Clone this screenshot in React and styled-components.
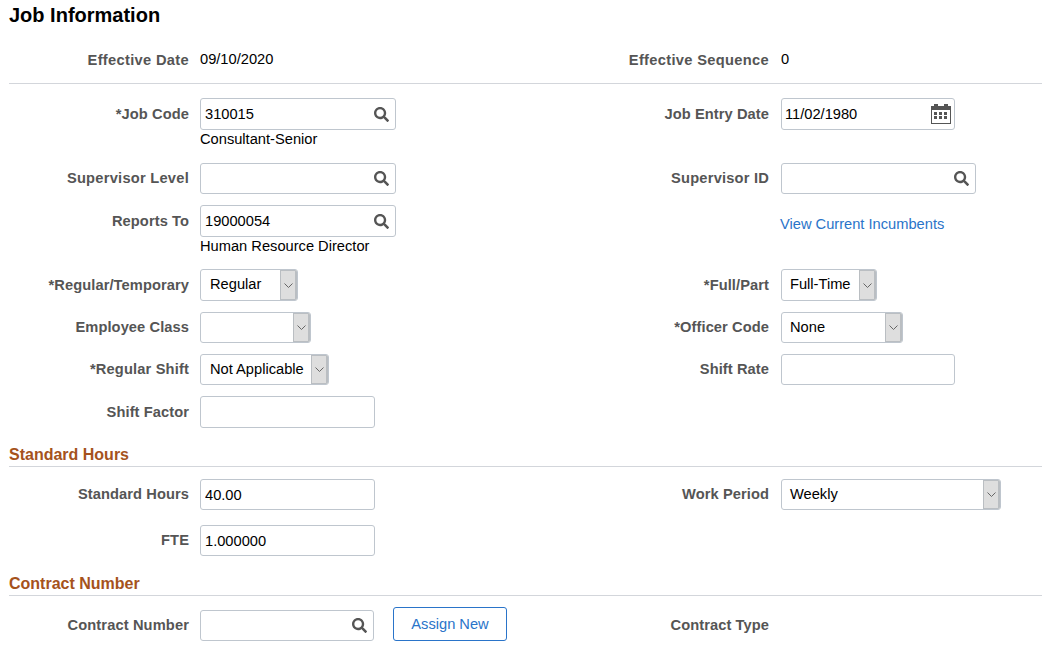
import React from 'react';
import styled, { createGlobalStyle } from 'styled-components';
import { FaSearch } from 'react-icons/fa';

const GlobalStyle = createGlobalStyle`
  html, body {
    margin: 0;
    background: #fff;
  }
  body {
    font-family: "Liberation Sans", Arial, sans-serif;
    font-size: 14.67px;
    color: #000;
  }
`;

const Page = styled.div`
  width: 1042px;
  height: 648px;
  padding-left: 9px;
  box-sizing: border-box;
  overflow: hidden;
`;

const Title = styled.h1`
  margin: 0;
  padding-top: 4px;
  font-size: 20px;
  line-height: 22px;
  font-weight: bold;
`;

const Row = styled.div`
  display: grid;
  grid-template-columns: 180px 391px 189px 1fr;
  margin-top: ${(p) => p.$top || 0}px;
`;

const Label = styled.label`
  text-align: right;
  font-weight: bold;
  letter-spacing: ${(p) => p.$track || 0.08}px;
  color: #555;
  line-height: ${(p) => (p.$compact ? 30 : 32)}px;
  height: 31px;
  white-space: nowrap;
`;

const TextInput = styled.input`
  flex: 1;
  min-width: 0;
  height: 100%;
  border: 0;
  outline: 0;
  padding: 0 0 0 4px;
  background: transparent;
  font: inherit;
  color: #000;
`;

const SelectValue = styled.span`
  flex: 1;
  padding-left: 9px;
  line-height: 29px;
  white-space: nowrap;
`;

const Field = styled.div`
  padding-left: ${(p) => (p.$right ? 12 : 11)}px;
  display: flex;
  flex-direction: ${(p) => (p.$inline ? 'row' : 'column')};
  align-items: flex-start;
  gap: ${(p) => (p.$inline ? 19 : 0)}px;

  ${TextInput} {
    padding-left: ${(p) => (p.$right ? 3 : 4)}px;
  }
  ${SelectValue} {
    padding-left: ${(p) => (p.$right ? 8 : 9)}px;
  }
`;

const Static = styled.span`
  line-height: 30px;
`;

const SubText = styled.div`
  line-height: 16px;
  margin-top: 1px;
`;

const InputBox = styled.div`
  display: flex;
  align-items: center;
  box-sizing: border-box;
  width: ${(p) => p.$width}px;
  height: ${(p) => p.$height || 31}px;
  border: 1px solid #bfc6ce;
  border-radius: 3px;
  background: #fff;
`;

const IconSlot = styled.span`
  display: flex;
  align-items: center;
  justify-content: center;
  margin-right: ${(p) => p.$gap}px;
  color: #555;
`;

const SelectBox = styled.div`
  display: flex;
  box-sizing: border-box;
  width: ${(p) => p.$width}px;
  height: ${(p) => p.$height || 31}px;
  border: 1px solid #bfc6ce;
  border-radius: 3px;
  background: #fff;
  overflow: hidden;
`;

const SelectArrow = styled.span`
  display: flex;
  align-items: center;
  justify-content: center;
  flex: none;
  box-sizing: border-box;
  width: 17px;
  background: #dedede;
  border: 1px solid #babec2;
  border-right-width: 2px;
  color: #666;
`;

const CurrentLink = styled.a`
  color: #2a74c9;
  line-height: 31px;
  margin: 4px 0 0 -1px;
  cursor: pointer;
`;

const SectionTitle = styled.h2`
  margin: ${(p) => p.$top}px 0 0;
  padding-bottom: 2px;
  border-bottom: 1px solid #d3d6db;
  font-size: 16px;
  line-height: 18px;
  font-weight: bold;
  color: #a5521c;
`;

const Divider = styled.div`
  height: 1px;
  background: #d3d6db;
  margin-top: 8px;
`;

const AssignButton = styled.button`
  box-sizing: border-box;
  width: 114px;
  height: 34px;
  margin-top: -3px;
  padding: 0;
  border: 1px solid #2a74c9;
  border-radius: 3px;
  background: #fff;
  color: #2a74c9;
  font: inherit;
`;

const CalendarIcon = () => (
  <svg width="20" height="20" viewBox="0 0 20 20" fill="#555">
    <rect x="0.5" y="2.5" width="19" height="17" fill="none" stroke="#555" />
    <rect x="0" y="2" width="20" height="4" />
    <rect x="3" y="0" width="4" height="4" />
    <rect x="13" y="0" width="4" height="4" />
    {[8, 12].flatMap((y) =>
      [3, 8, 13].map((x) => <rect key={`${x}-${y}`} x={x} y={y} width="3" height="3" />)
    )}
  </svg>
);

const Chevron = () => (
  <svg width="9" height="5" viewBox="0 0 9 5" fill="none" stroke="currentColor">
    <path d="M0.5 0.5 L4.5 4.5 L8.5 0.5" />
  </svg>
);

const LookupField = ({ width, height, value }) => (
  <InputBox $width={width} $height={height}>
    <TextInput readOnly value={value || ''} />
    <IconSlot $gap={6}><FaSearch size={15} /></IconSlot>
  </InputBox>
);

const PlainField = ({ width, height, value }) => (
  <InputBox $width={width} $height={height}>
    <TextInput readOnly value={value || ''} />
  </InputBox>
);

const Select = ({ width, height, value }) => (
  <SelectBox $width={width} $height={height}>
    <SelectValue>{value}</SelectValue>
    <SelectArrow><Chevron /></SelectArrow>
  </SelectBox>
);

export default function App() {
  return (
    <Page>
      <GlobalStyle />
      <Title>Job Information</Title>

      <Row $top={18}>
        <Label $track={0.32}>Effective Date</Label>
        <Field><Static>09/10/2020</Static></Field>
        <Label $track={0.32}>Effective Sequence</Label>
        <Field $right><Static>0</Static></Field>
      </Row>
      <Divider />

      <Row $top={14}>
        <Label>*Job Code</Label>
        <Field>
          <LookupField width={196} height={32} value="310015" />
          <SubText>Consultant-Senior</SubText>
        </Field>
        <Label>Job Entry Date</Label>
        <Field $right>
          <InputBox $width={174} $height={32}>
            <TextInput readOnly value="11/02/1980" />
            <IconSlot $gap={3}><CalendarIcon /></IconSlot>
          </InputBox>
        </Field>
      </Row>

      <Row $top={16}>
        <Label $compact $track={0.25}>Supervisor Level</Label>
        <Field><LookupField width={196} /></Field>
        <Label $compact $track={0.2}>Supervisor ID</Label>
        <Field $right><LookupField width={195} /></Field>
      </Row>

      <Row $top={11}>
        <Label>Reports To</Label>
        <Field>
          <LookupField width={196} height={32} value="19000054" />
          <SubText>Human Resource Director</SubText>
        </Field>
        <span />
        <Field $right><CurrentLink>View Current Incumbents</CurrentLink></Field>
      </Row>

      <Row $top={15}>
        <Label>*Regular/Temporary</Label>
        <Field><Select width={98} height={32} value="Regular" /></Field>
        <Label>*Full/Part</Label>
        <Field $right><Select width={96} height={32} value="Full-Time" /></Field>
      </Row>

      <Row $top={11}>
        <Label $compact>Employee Class</Label>
        <Field><Select width={111} /></Field>
        <Label $compact>*Officer Code</Label>
        <Field $right><Select width={122} value="None" /></Field>
      </Row>

      <Row $top={11}>
        <Label $compact $track={0.15}>*Regular Shift</Label>
        <Field><Select width={129} value="Not Applicable" /></Field>
        <Label $compact>Shift Rate</Label>
        <Field $right><PlainField width={174} /></Field>
      </Row>

      <Row $top={11}>
        <Label>Shift Factor</Label>
        <Field><PlainField width={175} height={32} /></Field>
      </Row>

      <SectionTitle $top={18}>Standard Hours</SectionTitle>

      <Row $top={12}>
        <Label $compact>Standard Hours</Label>
        <Field><PlainField width={175} value="40.00" /></Field>
        <Label $compact>Work Period</Label>
        <Field $right><Select width={220} value="Weekly" /></Field>
      </Row>

      <Row $top={15}>
        <Label $compact>FTE</Label>
        <Field><PlainField width={175} value="1.000000" /></Field>
      </Row>

      <SectionTitle $top={19}>Contract Number</SectionTitle>

      <Row $top={14}>
        <Label $compact $track={0.12}>Contract Number</Label>
        <Field $inline>
          <LookupField width={174} />
          <AssignButton>Assign New</AssignButton>
        </Field>
        <Label $compact>Contract Type</Label>
      </Row>
    </Page>
  );
}
